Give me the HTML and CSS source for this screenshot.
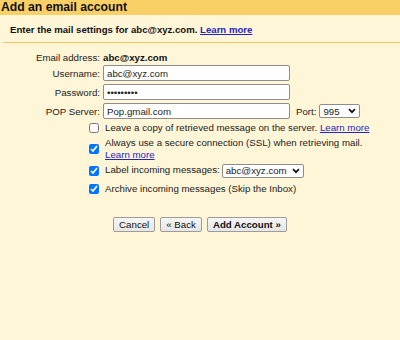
FILE: index.html
```html
<!DOCTYPE html>
<html lang="en">
<head>
  <meta charset="UTF-8">
  <meta name="viewport" content="width=device-width, initial-scale=1.0">
  <title>Add an email account</title>
  <link rel="stylesheet" href="styles.css">
</head>
<body>
  <h1 class="title">Add an email account</h1>
  <div class="intro">Enter the mail settings for abc@xyz.com. <a href="#">Learn more</a></div>

  <div class="fields">
    <div class="field email-row">
      <label class="field-label">Email address:</label>
      <span class="email-value">abc@xyz.com</span>
    </div>
    <div class="field">
      <label class="field-label" for="username">Username:</label>
      <input class="text-input" id="username" type="text" value="abc@xyz.com">
    </div>
    <div class="field">
      <label class="field-label" for="password">Password:</label>
      <input class="text-input" id="password" type="password" value="secretpw1">
    </div>
    <div class="field">
      <label class="field-label" for="pop-server">POP Server:</label>
      <input class="text-input" id="pop-server" type="text" value="Pop.gmail.com">
      <label class="port-label" for="port">Port:</label>
      <select class="dropdown port-select" id="port">
        <option>995</option>
        <option>110</option>
      </select>
    </div>
  </div>

  <div class="options">
    <div class="option">
      <input type="checkbox" class="check" id="leave-copy">
      <label for="leave-copy">Leave a copy of retrieved message on the server. <a href="#">Learn more</a></label>
    </div>
    <div class="option">
      <input type="checkbox" class="check" id="use-ssl" checked>
      <label for="use-ssl">Always use a secure connection (SSL) when retrieving mail.<br><a href="#">Learn more</a></label>
    </div>
    <div class="option">
      <input type="checkbox" class="check" id="label-incoming" checked>
      <label for="label-incoming">Label incoming messages:</label>
      <select class="dropdown label-select">
        <option>abc@xyz.com</option>
      </select>
    </div>
    <div class="option archive">
      <input type="checkbox" class="check" id="archive" checked>
      <label for="archive">Archive incoming messages (Skip the Inbox)</label>
    </div>
  </div>

  <div class="actions">
    <button>Cancel</button>
    <button>&laquo; Back</button>
    <button class="primary">Add Account &raquo;</button>
  </div>
</body>
</html>
```

FILE: styles.css
```css
body {
  margin: 0;
  min-height: 340px;
  background-color: #fff5d7;
  font-family: "Liberation Sans", Arial, sans-serif;
  font-size: 9.7px;
  color: #222;
}
a {
  color: #2323c8;
}
.title {
  margin: 0;
  padding-left: 1px;
  height: 15px;
  line-height: 15px;
  background-color: #f9d065;
  font-size: 12.2px;
  color: #111;
}
.intro {
  margin-left: 3px;
  padding: 9px 0 0 7px;
  height: 18px;
  line-height: 12px;
  border-bottom: 1px solid #f3c85e;
  font-size: 9.6px;
  font-weight: bold;
  color: #111;
}
.fields {
  padding-top: 8px;
}
.field {
  display: flex;
  align-items: center;
  height: 16px;
  margin-bottom: 3px;
}
.email-row {
  height: 12px;
  margin-bottom: 2px;
}
.field-label {
  width: 100px;
  margin-right: 3px;
  text-align: right;
}
.email-value {
  font-weight: bold;
  color: #111;
}
.text-input {
  box-sizing: border-box;
  width: 187px;
  height: 16px;
  padding: 0 3px;
  border: 1px solid #8d8d8d;
  border-radius: 2px;
  background: #fff;
  font-family: inherit;
  font-size: 9.7px;
  color: #222;
}
.port-label {
  margin: 0 3px 0 6px;
}
.dropdown {
  box-sizing: border-box;
  height: 14px;
  padding: 0 12px 0 3px;
  border: 1px solid #8d8d8d;
  border-radius: 2px;
  appearance: none;
  background: #fff url("data:image/svg+xml,%3Csvg xmlns='http://www.w3.org/2000/svg' width='8' height='6' viewBox='0 0 8 6'%3E%3Cpath d='M1 1.2 L4 4.2 L7 1.2' fill='none' stroke='%23111' stroke-width='1.7'/%3E%3C/svg%3E") no-repeat right 3px center;
  font-family: inherit;
  font-size: 9.7px;
  color: #222;
}
.port-select {
  width: 41px;
}
.label-select {
  width: 82px;
  margin-left: 2px;
}
.options {
  display: flex;
  flex-direction: column;
  gap: 2px;
  padding-left: 89px;
  margin-top: 1px;
}
.option {
  display: flex;
  align-items: center;
  line-height: 12.6px;
}
.archive {
  margin-top: 3px;
}
.check {
  width: 10px;
  height: 10px;
  margin: 0 6px 0 0;
}
.actions {
  display: flex;
  justify-content: center;
  gap: 5px;
  margin-top: 22px;
}
button {
  height: 15px;
  padding: 0 5px;
  border: 1px solid #9c9c9c;
  border-radius: 2px;
  background: linear-gradient(#f6f6f6, #e6e6e6);
  font-family: inherit;
  font-size: 9.7px;
  color: #111;
  cursor: pointer;
}
.primary {
  font-weight: bold;
}
```
